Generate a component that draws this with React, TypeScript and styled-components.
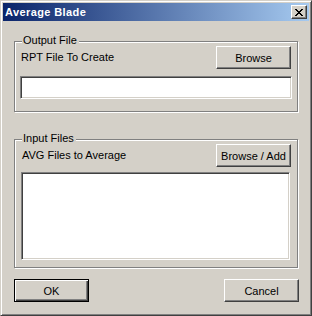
import React from "react";
import styled, { createGlobalStyle } from "styled-components";

const Global = createGlobalStyle`
  html, body { margin: 0; padding: 0; background: #d4d0c8; }
  body { font-family: "Liberation Sans", Arial, sans-serif; font-size: 11px; color: #000; }
`;

const Window = styled.div`
  box-sizing: border-box;
  width: 312px;
  height: 316px;
  background: #d4d0c8;
  border: 1px solid;
  border-color: #d4d0c8 #404040 #404040 #d4d0c8;
  box-shadow: inset 1px 1px 0 #ffffff, inset -1px -1px 0 #808080;
  padding: 2px;
  display: flex;
  flex-direction: column;
`;

const TitleBar = styled.div`
  height: 18px;
  flex: none;
  display: flex;
  align-items: center;
  justify-content: space-between;
  padding: 0 2px;
  background: linear-gradient(to right, #0a246a, #a6caf0);
`;

const Title = styled.span`
  color: #fff;
  font-weight: bold;
  font-size: 11px;
  line-height: 13px;
  letter-spacing: 0.4px;
`;

const CloseButton = styled.div`
  box-sizing: border-box;
  width: 16px;
  height: 14px;
  background: #d4d0c8;
  border: 1px solid;
  border-color: #fff #404040 #404040 #fff;
  box-shadow: inset -1px -1px 0 #808080;
  display: flex;
  align-items: center;
  justify-content: center;
`;

const Body = styled.div`
  flex: 1;
  display: flex;
  flex-direction: column;
  padding: 20px 11px 0 11px;
`;

const Group = styled.div<{ $mt?: number; $pb: number }>`
  position: relative;
  box-sizing: border-box;
  margin-top: ${(p) => p.$mt ?? 0}px;
  border: 1px solid #808080;
  box-shadow: inset 1px 1px 0 #fff, 1px 1px 0 #fff;
  display: flex;
  flex-direction: column;
  padding: 4px 5px ${(p) => p.$pb}px 5px;
`;

const Legend = styled.span`
  position: absolute;
  top: -8px;
  left: 7px;
  padding: 0 2px 0 1px;
  background: #d4d0c8;
  line-height: 13px;
`;

const Row = styled.div<{ $pl: number }>`
  display: flex;
  align-items: center;
  justify-content: space-between;
  padding: 0 1px 0 ${(p) => p.$pl}px;
`;

const Label = styled.span`
  line-height: 13px;
`;

const Button = styled.button<{ $default?: boolean }>`
  box-sizing: border-box;
  width: 75px;
  height: 23px;
  margin: 0;
  padding: 0;
  background: #d4d0c8;
  font-family: "Liberation Sans", Arial, sans-serif;
  font-size: 11px;
  color: #000;
  border: 1px solid;
  border-color: ${(p) => (p.$default ? "#000" : "#fff #404040 #404040 #fff")};
  box-shadow: ${(p) =>
    p.$default
      ? "inset 1px 1px 0 #fff, inset -1px -1px 0 #404040, inset -2px -2px 0 #808080"
      : "inset -1px -1px 0 #808080"};
`;

const TextInput = styled.div`
  box-sizing: border-box;
  height: 23px;
  margin-top: 7px;
  background: #fff;
  border: 1px solid;
  border-color: #808080 #fff #fff #808080;
  box-shadow: inset 1px 1px 0 #404040, inset -1px -1px 0 #d4d0c8;
`;

const ListBox = styled.div`
  box-sizing: border-box;
  height: 88px;
  margin: 5px 2px 0 1px;
  background: #fff;
  border: 1px solid;
  border-color: #808080 #fff #fff #808080;
  box-shadow: inset 1px 1px 0 #404040, inset -1px -1px 0 #d4d0c8;
`;

const Footer = styled.div`
  display: flex;
  justify-content: space-between;
  margin-top: 11px;
  margin-right: -1px;
`;

export default function App() {
  return (
    <>
      <Global />
      <Window>
        <TitleBar>
          <Title>Average Blade</Title>
          <CloseButton>
            <svg width="8" height="7" viewBox="0 0 8 7" shapeRendering="crispEdges">
              <path
                d="M0 0h2v1h-2z M6 0h2v1h-2z M1 1h2v1h-2z M5 1h2v1h-2z M2 2h4v1h-4z M3 3h2v1h-2z M2 4h4v1h-4z M1 5h2v1h-2z M5 5h2v1h-2z M0 6h2v1h-2z M6 6h2v1h-2z"
                fill="#000"
              />
            </svg>
          </CloseButton>
        </TitleBar>
        <Body>
          <Group $pb={12}>
            <Legend>Output File</Legend>
            <Row $pl={1}>
              <Label>RPT File To Create</Label>
              <Button>Browse</Button>
            </Row>
            <TextInput />
          </Group>
          <Group $mt={27} $pb={7}>
            <Legend>Input Files</Legend>
            <Row $pl={2}>
              <Label>AVG Files to Average</Label>
              <Button>Browse / Add</Button>
            </Row>
            <ListBox />
          </Group>
          <Footer>
            <Button $default>OK</Button>
            <Button>Cancel</Button>
          </Footer>
        </Body>
      </Window>
    </>
  );
}
